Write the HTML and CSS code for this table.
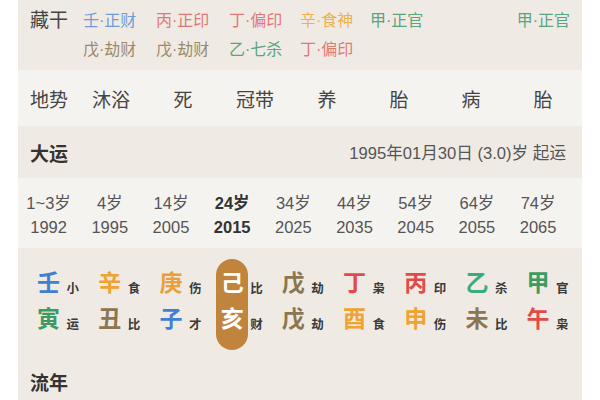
FILE: index.html
```html
<!DOCTYPE html>
<html lang="zh">
<head>
<meta charset="utf-8">
<link rel="stylesheet" href="styles.css">
</head>
<body>
<div class="panel">
  <section class="cg">
    <div class="cg-label">藏干</div>
    <div class="cg-grid">
      <span class="c-blue">壬·正财</span>
      <span class="c-red">丙·正印</span>
      <span class="c-red">丁·偏印</span>
      <span class="c-orange">辛·食神</span>
      <span class="c-green">甲·正官</span>
      <span class="c-green right">甲·正官</span>
      <span class="c-brown">戊·劫财</span>
      <span class="c-brown">戊·劫财</span>
      <span class="c-green">乙·七杀</span>
      <span class="c-red">丁·偏印</span>
    </div>
  </section>

  <section class="ds">
    <div class="ds-label">地势</div>
    <span>沐浴</span><span>死</span><span>冠带</span><span>养</span><span>胎</span><span>病</span><span>胎</span>
  </section>

  <section class="head">
    <div class="title">大运</div>
    <div class="date">1995年01月30日 (3.0)岁 起运</div>
  </section>

  <section class="ages">
    <div class="age"><span>1~3岁</span><span>1992</span></div>
    <div class="age"><span>4岁</span><span>1995</span></div>
    <div class="age"><span>14岁</span><span>2005</span></div>
    <div class="age cur"><span>24岁</span><span>2015</span></div>
    <div class="age"><span>34岁</span><span>2025</span></div>
    <div class="age"><span>44岁</span><span>2035</span></div>
    <div class="age"><span>54岁</span><span>2045</span></div>
    <div class="age"><span>64岁</span><span>2055</span></div>
    <div class="age"><span>74岁</span><span>2065</span></div>
  </section>

  <section class="pillars">
    <div class="pl">
      <div class="chars"><b class="p-blue">壬</b><b class="p-green">寅</b></div>
      <div class="tags"><i>小</i><i>运</i></div>
    </div>
    <div class="pl">
      <div class="chars"><b class="p-orange">辛</b><b class="p-brown">丑</b></div>
      <div class="tags"><i>食</i><i>比</i></div>
    </div>
    <div class="pl">
      <div class="chars"><b class="p-orange2">庚</b><b class="p-blue">子</b></div>
      <div class="tags"><i>伤</i><i>才</i></div>
    </div>
    <div class="pl">
      <div class="chars pill"><b>己</b><b>亥</b></div>
      <div class="tags"><i>比</i><i>财</i></div>
    </div>
    <div class="pl">
      <div class="chars"><b class="p-brown">戊</b><b class="p-brown">戊</b></div>
      <div class="tags"><i>劫</i><i>劫</i></div>
    </div>
    <div class="pl">
      <div class="chars"><b class="p-red">丁</b><b class="p-orange">酉</b></div>
      <div class="tags"><i>枭</i><i>食</i></div>
    </div>
    <div class="pl">
      <div class="chars"><b class="p-red">丙</b><b class="p-orange">申</b></div>
      <div class="tags"><i>印</i><i>伤</i></div>
    </div>
    <div class="pl">
      <div class="chars"><b class="p-green2">乙</b><b class="p-brown">未</b></div>
      <div class="tags"><i>杀</i><i>比</i></div>
    </div>
    <div class="pl">
      <div class="chars"><b class="p-green">甲</b><b class="p-red">午</b></div>
      <div class="tags"><i>官</i><i>枭</i></div>
    </div>
  </section>

  <section class="ln">
    <div class="title">流年</div>
  </section>
</div>
</body>
</html>
```

FILE: styles.css
```css
* { box-sizing: border-box; margin: 0; padding: 0; }
html, body { background: #ffffff; }
body {
  font-family: "Liberation Sans", "Noto Sans CJK SC", sans-serif;
  color: #444;
  width: 600px;
  height: 400px;
  overflow: hidden;
}
.panel {
  margin-left: 18px;
  width: 564px;
  background: #efebe4;
}

/* 藏干 */
.cg {
  display: flex;
  align-items: flex-start;
  height: 70px;
  padding: 6px 12px 0 12px;
}
.cg-label {
  width: 53px;
  font-size: 19px;
  line-height: 29px;
  color: #444;
}
.cg-grid {
  flex: 1;
  display: grid;
  grid-template-columns: 73px 73px 71px 70px 1fr auto;
  grid-auto-rows: 29px;
  font-size: 16px;
  line-height: 29px;
  white-space: nowrap;
}
.cg-grid .right { justify-self: end; }
.c-blue { color: #6f9bd6; }
.c-red { color: #e07878; }
.c-orange { color: #f0b04e; }
.c-green { color: #5aa47e; }
.c-brown { color: #9a8a6a; }

/* 地势 */
.ds {
  display: grid;
  grid-template-columns: 45px repeat(7, 72px);
  align-items: center;
  height: 56px;
  padding-left: 12px;
  background: #f5f3ef;
  font-size: 19px;
  color: #444;
}
.ds span { text-align: center; }

/* 大运 header */
.head {
  display: flex;
  justify-content: space-between;
  align-items: center;
  height: 52px;
  padding: 0 16px 0 12px;
}
.title {
  font-size: 19px;
  font-weight: 700;
  color: #333;
}
.date {
  font-size: 16.6px;
  color: #555;
}

/* ages */
.ages {
  display: grid;
  grid-template-columns: repeat(9, 61.2px);
  height: 70px;
  padding-top: 13px;
  background: #f5f3ef;
}
.age {
  display: flex;
  flex-direction: column;
  align-items: center;
  font-size: 16.5px;
  line-height: 24px;
  color: #555;
}
.age.cur { font-weight: 700; color: #333; }

/* pillars */
.pillars {
  display: grid;
  grid-template-columns: repeat(9, 61.2px);
  height: 102px;
  padding-top: 11px;
}
.pl {
  display: grid;
  grid-template-columns: 1fr auto 1fr;
}
.chars {
  grid-column: 2;
  display: flex;
  flex-direction: column;
  align-items: center;
  width: 32px;
  padding: 6px 0;
}
.chars b {
  font-size: 23px;
  font-weight: 700;
  line-height: 36px;
}
.pill {
  background: #c0843c;
  border-radius: 16px;
}
.pill b { color: #fff; }
.tags {
  grid-column: 3;
  display: flex;
  flex-direction: column;
  padding: 12px 0 0 2px;
}
.tags i {
  font-style: normal;
  font-size: 12.5px;
  font-weight: 700;
  line-height: 36px;
  color: #3a3a3a;
}
.p-blue { color: #3f7fd4; }
.p-green { color: #3f9a62; }
.p-green2 { color: #3aab7c; }
.p-orange { color: #f0a232; }
.p-orange2 { color: #e9a03c; }
.p-brown { color: #8b7650; }
.p-red { color: #e24a4a; }

/* 流年 */
.ln {
  height: 50px;
  padding: 18px 12px 0 12px;
}
```
